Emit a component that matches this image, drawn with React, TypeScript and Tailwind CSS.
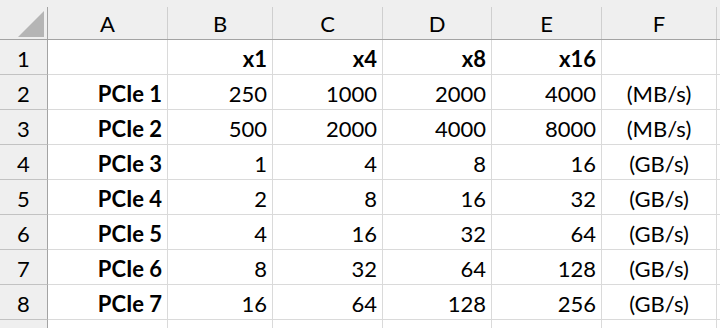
const cols = ["A", "B", "C", "D", "E", "F"];

const widths = ["w-[120px]", "w-[105px]", "w-[110px]", "w-[109px]", "w-[110px]", "w-[115px]"];

type Row = { label: string; values: string[]; unit: string; bold?: boolean };

const rows: Row[] = [
    { label: "", values: ["x1", "x4", "x8", "x16"], unit: "", bold: true },
    { label: "PCIe 1", values: ["250", "1000", "2000", "4000"], unit: "(MB/s)" },
    { label: "PCIe 2", values: ["500", "2000", "4000", "8000"], unit: "(MB/s)" },
    { label: "PCIe 3", values: ["1", "4", "8", "16"], unit: "(GB/s)" },
    { label: "PCIe 4", values: ["2", "8", "16", "32"], unit: "(GB/s)" },
    { label: "PCIe 5", values: ["4", "16", "32", "64"], unit: "(GB/s)" },
    { label: "PCIe 6", values: ["8", "32", "64", "128"], unit: "(GB/s)" },
    { label: "PCIe 7", values: ["16", "64", "128", "256"], unit: "(GB/s)" },
];

const cell = "h-[35px] shrink-0 border-r border-b border-[#dadada] leading-[35px] pt-[1px] overflow-hidden";

export default function App() {
    return (
        <div
            className="w-[720px] h-[328px] overflow-hidden bg-white text-black text-[22px]"
            style={{ fontFamily: "Lato, 'Open Sans', sans-serif" }}
        >
            {/* column headers */}
            <div className="flex h-[40px] bg-[#efefef] border-b border-[#a3a3a3] pt-[7px]">
                <div className="w-[48px] shrink-0 border-r border-[#a3a3a3] relative">
                    <svg className="absolute left-[18px] top-[4px]" width="26" height="26" viewBox="0 0 26 26">
                        <polygon points="26,0 26,26 0,26" fill="#b5b5b5" />
                    </svg>
                </div>
                {cols.map((c, i) => (
                    <div
                        key={c}
                        className={`${widths[i]} shrink-0 border-r border-[#cfcfcf] flex items-center justify-center`}
                    >
                        {c}
                    </div>
                ))}
                <div className="flex-1" />
            </div>

            {/* body */}
            {rows.map((r, ri) => (
                <div key={ri} className="flex">
                    <div className="w-[48px] h-[35px] shrink-0 bg-[#efefef] border-r border-b border-r-[#a3a3a3] border-b-[#c2c2c2] text-center leading-[35px] pt-[1px]">
                        {ri + 1}
                    </div>
                    <div className={`${widths[0]} ${cell} text-right pr-[5px] font-bold`}>{r.label}</div>
                    {r.values.map((v, vi) => (
                        <div
                            key={vi}
                            className={`${widths[vi + 1]} ${cell} text-right pr-[5px] ${r.bold ? "font-bold" : ""}`}
                        >
                            {v}
                        </div>
                    ))}
                    <div className={`${widths[5]} ${cell} text-center`}>{r.unit}</div>
                    <div className="flex-1 h-[35px] border-b border-[#dadada]" />
                </div>
            ))}

            {/* partial row 9 */}
            <div className="flex h-[8px]">
                <div className="w-[48px] shrink-0 bg-[#efefef] border-r border-[#a3a3a3]" />
                {widths.map((w, i) => (
                    <div key={i} className={`${w} shrink-0 border-r border-[#dadada]`} />
                ))}
            </div>
        </div>
    );
}
